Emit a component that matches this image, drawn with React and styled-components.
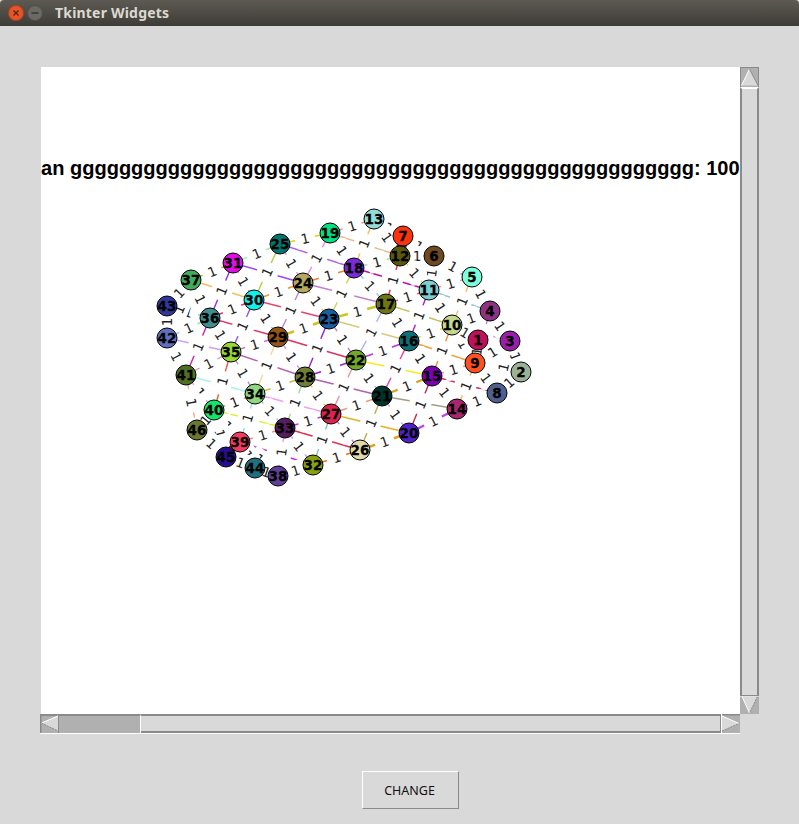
import React from "react";
import styled, { createGlobalStyle } from "styled-components";

const Global = createGlobalStyle`
  html, body { margin: 0; padding: 0; background: #d9d9d9; }
  #root { width: 799px; height: 824px; overflow: hidden; }
`;

const Win = styled.div`
  width: 799px;
  height: 824px;
  background: #d9d9d9;
  display: flex;
  flex-direction: column;
`;
const TitleBar = styled.div`
  height: 26px;
  flex: none;
  box-sizing: border-box;
  padding: 0 0 1px 8px;
  display: flex;
  align-items: center;
  gap: 3px;
  background: linear-gradient(#5c5a52, #3e3c37);
  border-radius: 4px 4px 0 0;
`;
const Dot = styled.span`
  width: 16px;
  height: 16px;
  border-radius: 50%;
  flex: none;
  display: flex;
  background: ${(p) => p.$bg};
  box-shadow: inset 0 0 0 1px rgba(0, 0, 0, 0.25);
`;
const WinTitle = styled.span`
  margin-left: 9px;
  font: bold 14px "Noto Sans", sans-serif;
  letter-spacing: 0.2px;
  color: #dcd9d0;
`;
const Content = styled.div`
  padding: 41px 0 0 40px;
  display: grid;
  grid-template-columns: 700px 19px;
  grid-template-rows: 647px 20px;
`;
const Canvas = styled.div`
  background: #fff;
  box-sizing: border-box;
  margin-left: 1px;
  height: 647px;
  overflow: hidden;
`;
const ChartSvg = styled.svg`
  display: block;
  width: 699px;
  height: 647px;
`;
const VBar = styled.div`
  display: flex;
  flex-direction: column;
  width: 19px;
`;
const VTrough = styled.div`
  flex: 1;
  background: #d9d9d9;
  border-top: 2px solid #fff;
  border-left: 2px solid #8a8a8a;
  border-right: 2px solid #8a8a8a;
  border-bottom: 1px solid #8a8a8a;
`;
const HBar = styled.div`
  display: flex;
  height: 20px;
  box-sizing: border-box;
  grid-column: 1;
  border-bottom: 1px solid #fff;
`;
const HThumb = styled.div`
  width: 82px;
  background: #b0b0b0;
  border-top: 2px solid #8a8a8a;
  border-right: 1px solid #fff;
  box-sizing: border-box;
`;
const HTrough = styled.div`
  flex: 1;
  background: #d9d9d9;
  box-sizing: border-box;
  border-top: 2px solid #8a8a8a;
  border-bottom: 2px solid #8a8a8a;
  border-right: 1px solid #8a8a8a;
`;
const ArrowSvg = styled.svg`
  display: block;
  flex: none;
`;
const Footer = styled.div`
  padding: 37px 0 0 362px;
`;
const Change = styled.button`
  width: 97px;
  height: 38px;
  padding: 0 2px 0 0;
  display: block;
  background: #d9d9d9;
  border: 1px solid #8a8a8a;
  border-top-color: #fff;
  border-left-color: #fff;
  font: 12.5px "Noto Sans", sans-serif;
  color: #111;
`;

const nodes = {
  1: [478, 340, "#c0105a"], 2: [521, 372, "#9ab294"], 3: [510, 341, "#9a1fa8"], 4: [490, 311, "#8d3384"],
  5: [472, 277, "#7dffdb"], 6: [434, 256, "#6e4a1e"], 7: [403, 236, "#ff3210"], 8: [497, 393, "#505f8f"],
  9: [475, 363, "#ff5020"], 10: [452, 325, "#c5d88e"], 11: [429, 290, "#79cfd2"], 12: [400, 256, "#5c5a0a"],
  13: [374, 219, "#93dcd8"], 14: [457, 409, "#a8286f"], 15: [432, 376, "#8000b8"], 16: [409, 341, "#0f6f78"],
  17: [386, 304, "#6f7710"], 18: [354, 268, "#7a2ad8"], 19: [330, 233, "#05e080"], 20: [409, 433, "#5020c8"],
  21: [382, 396, "#00352a"], 22: [356, 360, "#72a82a"], 23: [329, 319, "#1a5fa0"], 24: [303, 283, "#b5a860"],
  25: [280, 244, "#007870"], 26: [360, 450, "#e0d8a8"], 27: [331, 414, "#e02050"], 28: [305, 377, "#6f8035"],
  29: [278, 337, "#955518"], 30: [254, 300, "#10f0e8"], 31: [233, 263, "#e010e0"], 32: [313, 465, "#88a010"],
  33: [285, 428, "#5a1a60"], 34: [255, 394, "#90d880"], 35: [231, 352, "#98d830"], 36: [210, 318, "#3f8f90"],
  37: [191, 280, "#3fae58"], 38: [278, 476, "#5f3f98"], 39: [240, 442, "#f83860"], 40: [214, 410, "#10e868"],
  41: [186, 375, "#4f7020"], 42: [167, 338, "#6070c0"], 43: [167, 306, "#30389a"], 44: [255, 468, "#207080"],
  45: [226, 457, "#280f90"], 46: [197, 430, "#6a7830"],
};

const columns = [
  [1, 7], [8, 13], [14, 19], [20, 25], [26, 31], [32, 37], [38, 43], [44, 46],
];

const colors = {
  "23-30": "#e84070", "24-31": "#a040f0", "18-25": "#b060f0", "18-24": "#f08030", "29-36": "#e83060",
  "17-23": "#c8c820", "25-30": "#b8d040", "31-36": "#9030e0", "30-35": "#9050f0", "36-41": "#d020b0",
  "19-24": "#f080f0", "18-23": "#c0d850", "23-28": "#9020d0", "28-33": "#a0d890", "33-38": "#f0a0c0",
  "35-40": "#e86040", "29-34": "#f0d8a0", "34-39": "#90e0e8", "41-46": "#f0a8a0", "34-41": "#a8f0f0",
  "33-40": "#d8f020", "26-33": "#e03050", "32-39": "#c030e0", "15-22": "#f0f020", "8-15": "#d03060",
  "14-21": "#a0a080", "21-28": "#b060b0", "20-27": "#e8b020", "27-34": "#f0a0f0", "28-35": "#b860b0",
  "11-18": "#c010a0", "10-17": "#c8c060", "9-16": "#f0a040", "16-23": "#d8c878", "22-29": "#e03060",
  "12-19": "#f0b890", "12-17": "#f03050", "17-22": "#a8b0e8", "22-27": "#e890a0", "27-32": "#80c8b0",
  "11-16": "#a020d0", "16-21": "#e040a0", "21-26": "#b8b050", "15-20": "#c02850", "10-15": "#e89030",
  "26-32": "#f07010", "20-26": "#e8a020", "14-20": "#c040f0", "11-17": "#f05080", "15-21": "#d8a020",
  "22-28": "#a020d0", "16-22": "#c030e0", "30-36": "#e83070", "25-31": "#a0f0b0", "19-25": "#e0d020",
  "31-37": "#c0c040", "24-30": "#f09030", "23-29": "#d0c020", "29-35": "#c870d0", "35-41": "#c890d0",
  "28-34": "#c0c040", "34-40": "#d0a080", "27-33": "#c040c0", "21-27": "#e0a080",
};
const thick = new Set(["17-23", "23-29", "14-20", "20-26", "15-21"]);
const palette = ["#e070c0", "#f0c060", "#a0e0a0", "#d0a0f0", "#f09090", "#90c8e0", "#e0e070", "#c080d0"];

const edges = [];
const add = (a, b) => {
  if (nodes[a] && nodes[b]) edges.push([a, b]);
};
columns.forEach(([s, e], k) => {
  for (let i = s; i < e; i++) add(i, i + 1);
  const next = columns[k + 1];
  if (!next) return;
  for (let i = s; i <= e; i++) {
    [5, 6, 7].forEach((d) => {
      const t = i + d;
      if (t >= next[0] && t <= next[1]) add(i, t);
    });
  }
});
add(1, 9);
add(1, 10);

const Graph = () => (
  <ChartSvg viewBox="41 67 699 647">
    <text
      x="41"
      y="174.5"
      fontFamily="'Liberation Sans', Arial, sans-serif"
      fontWeight="bold"
      fontSize="20.05"
      fill="#000"
    >
      {"an " + "g".repeat(51) + ": 100"}
    </text>
    {edges.map(([a, b]) => {
      const key = `${a}-${b}`;
      const c = colors[key] || palette[(a * 7 + b * 3) % palette.length];
      return (
        <line
          key={key}
          x1={nodes[a][0]}
          y1={nodes[a][1]}
          x2={nodes[b][0]}
          y2={nodes[b][1]}
          stroke={c}
          strokeWidth={thick.has(key) ? 2.4 : 1.4}
        />
      );
    })}
    {edges.map(([a, b]) => {
      const mx = (nodes[a][0] + nodes[b][0]) / 2;
      const my = (nodes[a][1] + nodes[b][1]) / 2;
      let ang = (Math.atan2(nodes[b][1] - nodes[a][1], nodes[b][0] - nodes[a][0]) * 180) / Math.PI;
      if (ang > 90) ang -= 180;
      if (ang < -90) ang += 180;
      return (
        <g key={`${a}_${b}`} transform={`translate(${mx} ${my}) rotate(${ang.toFixed(1)})`}>
          <rect x="-10" y="-10" width="20" height="20" rx="4" fill="#fff" />
          <text
            y="5"
            textAnchor="middle"
            fontFamily="'DejaVu Sans', sans-serif"
            fontSize="13.5"
            fill="#222"
          >
            1
          </text>
        </g>
      );
    })}
    {Object.entries(nodes).map(([n, [x, y, c]]) => (
      <g key={n}>
        <circle cx={x} cy={y} r="10" fill={c} stroke="#000" strokeWidth="1" />
        <text
          x={x}
          y={y + 4.8}
          textAnchor="middle"
          fontFamily="'DejaVu Sans', sans-serif"
          fontWeight="bold"
          fontSize="13.5"
          fill="#000"
          stroke="#000"
          strokeWidth="0.3"
        >
          {n}
        </text>
      </g>
    ))}
  </ChartSvg>
);

const D = "#8a8a8a";
const L = "#fff";
const Up = () => (
  <ArrowSvg width="19" height="20" viewBox="0 0 19 20">
    <rect x="0" y="0" width="19" height="20" fill="#b0b0b0" />
    <path d="M0 .5H19M.5 0V20M18.5 0V20" stroke={D} fill="none" />
    <polygon points="9.5,2 18,18.5 1.5,18.5" fill="#d9d9d9" />
    <line x1="9.5" y1="2" x2="1.5" y2="18.5" stroke={L} />
    <line x1="9.5" y1="2" x2="18" y2="18.5" stroke={D} />
  </ArrowSvg>
);
const Down = () => (
  <ArrowSvg width="19" height="18" viewBox="0 0 19 18">
    <rect x="0" y="0" width="19" height="18" fill="#b0b0b0" />
    <polygon points="2,.5 17.5,.5 9.5,17" fill="#d9d9d9" />
    <line x1="2" y1=".5" x2="9.5" y2="17" stroke={L} />
    <line x1="17.5" y1=".5" x2="9.5" y2="17" stroke={D} strokeDasharray="2 1" />
    <line x1="0" y1="0" x2="19" y2="0" stroke={L} strokeWidth="1" />
  </ArrowSvg>
);
const Left = () => (
  <ArrowSvg width="19" height="19" viewBox="0 0 19 19">
    <rect x="0" y="0" width="19" height="19" fill="#b0b0b0" />
    <path d="M0 1H19M.5 0V19" stroke={D} strokeWidth="2" fill="none" />
    <polygon points="1.5,9 18,1.5 18,17" fill="#d9d9d9" />
    <line x1="1.5" y1="9" x2="18" y2="2" stroke={L} />
    <line x1="1.5" y1="9" x2="18" y2="17" stroke={D} strokeDasharray="2 1" />
    <rect x="18" y="0" width="1" height="19" fill={D} />
  </ArrowSvg>
);
const Right = () => (
  <ArrowSvg width="19" height="19" viewBox="0 0 19 19">
    <rect x="0" y="0" width="19" height="19" fill="#b0b0b0" />
    <rect x="0" y="0" width="19" height="1.5" fill={D} />
    <rect x="0" y="0" width="1" height="19" fill={L} />
    <polygon points="1,2 18,9.5 1,17" fill="#d9d9d9" />
    <line x1="1" y1="2" x2="18" y2="9.5" stroke={L} />
    <line x1="1" y1="17" x2="18" y2="9.5" stroke={D} strokeDasharray="2 1" />
  </ArrowSvg>
);

export default function App() {
  return (
    <Win>
      <Global />
      <TitleBar>
        <Dot $bg="#e4562a">
          <svg width="16" height="16" viewBox="0 0 16 16">
            <path d="M5.5 5.5l5 5M10.5 5.5l-5 5" stroke="#5a1e0c" strokeWidth="1.2" />
          </svg>
        </Dot>
        <Dot $bg="#6b6963">
          <svg width="16" height="16" viewBox="0 0 16 16">
            <path d="M4.5 8h7" stroke="#35342f" strokeWidth="1.4" />
          </svg>
        </Dot>
        <WinTitle>Tkinter Widgets</WinTitle>
      </TitleBar>
      <Content>
        <Canvas>
          <Graph />
        </Canvas>
        <VBar>
          <Up />
          <VTrough />
          <Down />
        </VBar>
        <HBar>
          <Left />
          <HThumb />
          <HTrough />
          <Right />
        </HBar>
      </Content>
      <Footer>
        <Change>CHANGE</Change>
      </Footer>
    </Win>
  );
}
